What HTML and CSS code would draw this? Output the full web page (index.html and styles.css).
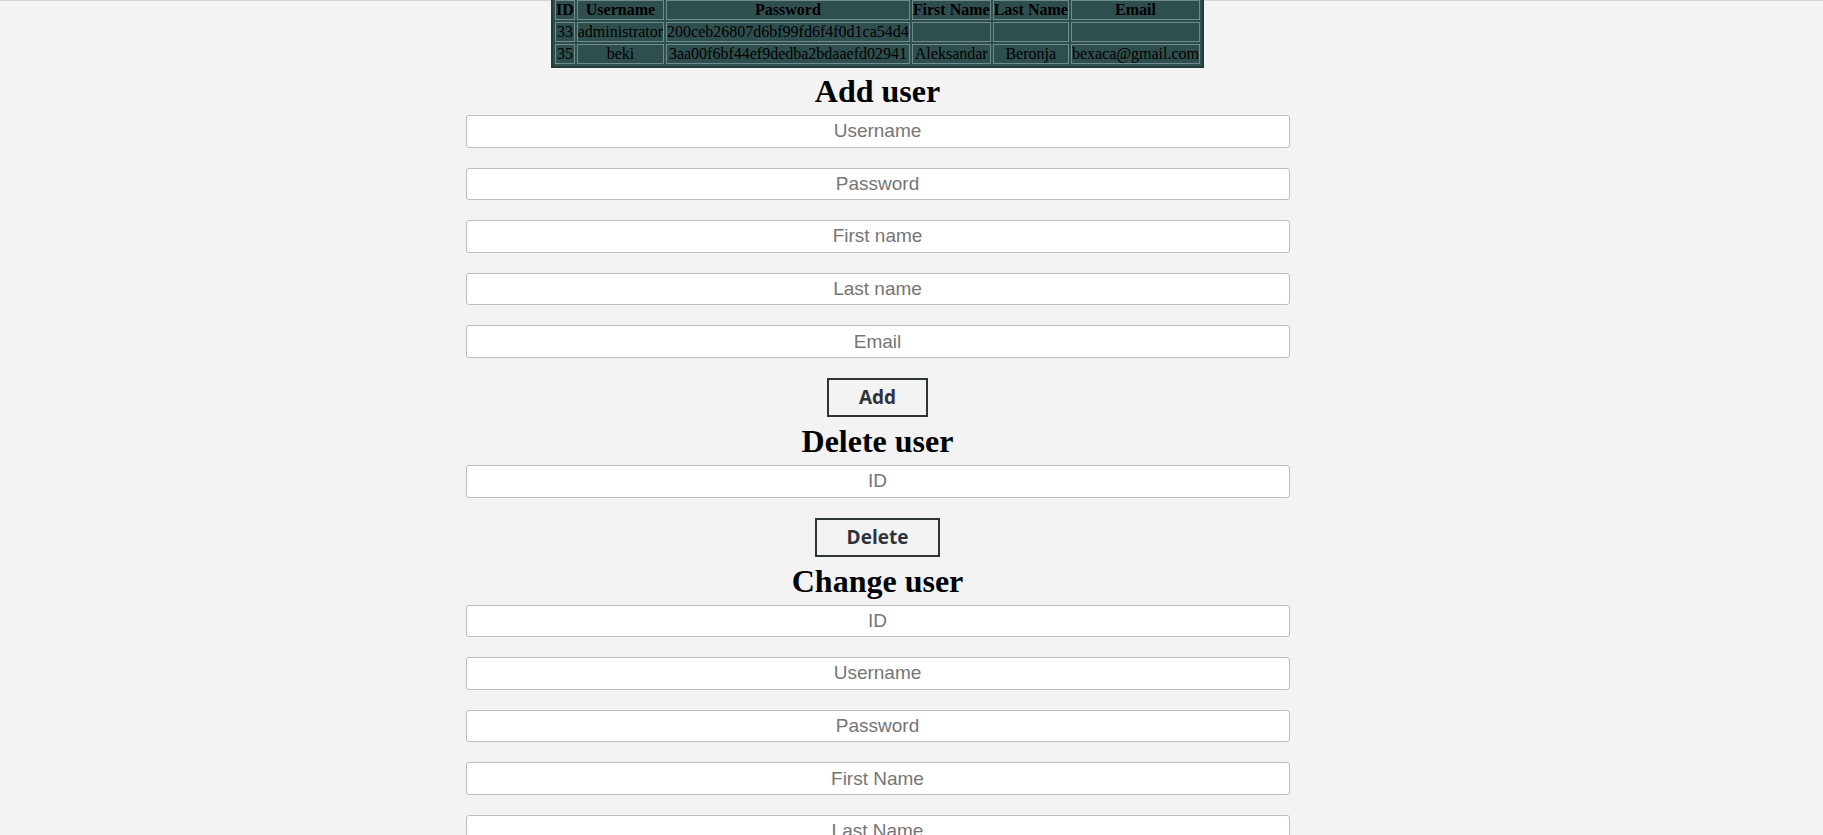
FILE: index.html
```html
<!DOCTYPE html>
<html>
<head>
<meta charset="utf-8">
<title>Users</title>
<link rel="stylesheet" href="styles.css">
</head>
<body>
<div class="topline"></div>
<div class="page">
  <table class="users">
    <tr><th>ID</th><th>Username</th><th>Password</th><th>First Name</th><th>Last Name</th><th>Email</th></tr>
    <tr><td>33</td><td>administrator</td><td>200ceb26807d6bf99fd6f4f0d1ca54d4</td><td></td><td></td><td></td></tr>
    <tr><td>35</td><td>beki</td><td>3aa00f6bf44ef9dedba2bdaaefd02941</td><td>Aleksandar</td><td>Beronja</td><td>bexaca@gmail.com</td></tr>
  </table>

  <h1 class="title">Add user</h1>
  <form class="form">
    <input class="field" type="text" placeholder="Username">
    <input class="field" type="password" placeholder="Password">
    <input class="field" type="text" placeholder="First name">
    <input class="field" type="text" placeholder="Last name">
    <input class="field" type="text" placeholder="Email">
    <button class="btn" type="button">Add</button>
  </form>

  <h1 class="title">Delete user</h1>
  <form class="form">
    <input class="field" type="text" placeholder="ID">
    <button class="btn" type="button">Delete</button>
  </form>

  <h1 class="title">Change user</h1>
  <form class="form">
    <input class="field" type="text" placeholder="ID">
    <input class="field" type="text" placeholder="Username">
    <input class="field" type="password" placeholder="Password">
    <input class="field" type="text" placeholder="First Name">
    <input class="field" type="text" placeholder="Last Name">
    <input class="field" type="text" placeholder="Email">
    <button class="btn" type="button">Change</button>
  </form>
</div>
</body>
</html>
```

FILE: styles.css
```css
html, body {
  margin: 0;
  padding: 0;
  background: #f3f3f3;
}

.topline {
  height: 1px;
  background: #d6d6d6;
}

.page {
  padding-right: 68px;
  display: flex;
  flex-direction: column;
  align-items: center;
}

.users {
  margin-top: -5px;
  margin-bottom: -1px;
  background: #2f4f4f;
  border: 2px solid #223a3a;
  border-spacing: 2px;
  font-family: "Liberation Serif", "Times New Roman", serif;
  font-size: 16px;
  line-height: 18px;
  color: #000;
}

.users th,
.users td {
  border: 1px solid #718c8c;
  padding: 0;
  text-align: center;
  white-space: nowrap;
  height: 18px;
}

.users th {
  font-weight: bold;
}

.title {
  margin: 0;
  font-family: "Liberation Serif", "Times New Roman", serif;
  font-size: 32px;
  line-height: 48px;
  font-weight: bold;
  color: #000;
  text-align: center;
}

.form {
  display: flex;
  flex-direction: column;
  align-items: center;
  margin: 0;
}

.field {
  box-sizing: border-box;
  width: 824px;
  height: 32.6px;
  margin: 0 0 20px 0;
  padding: 0 8px;
  border: 1px solid #bdbdbd;
  border-radius: 3px;
  background: #fff;
  font-family: "Liberation Sans", Arial, sans-serif;
  font-size: 19px;
  color: #333;
  text-align: center;
}

.field::placeholder {
  color: #757575;
}

.btn {
  box-sizing: border-box;
  height: 39px;
  margin: 0;
  padding: 0 30px;
  border: 2px solid #2d3436;
  border-radius: 0;
  background: transparent;
  font-family: "Open Sans", "Noto Sans", sans-serif;
  font-size: 19px;
  font-weight: 700;
  color: #2d3339;
}
```
